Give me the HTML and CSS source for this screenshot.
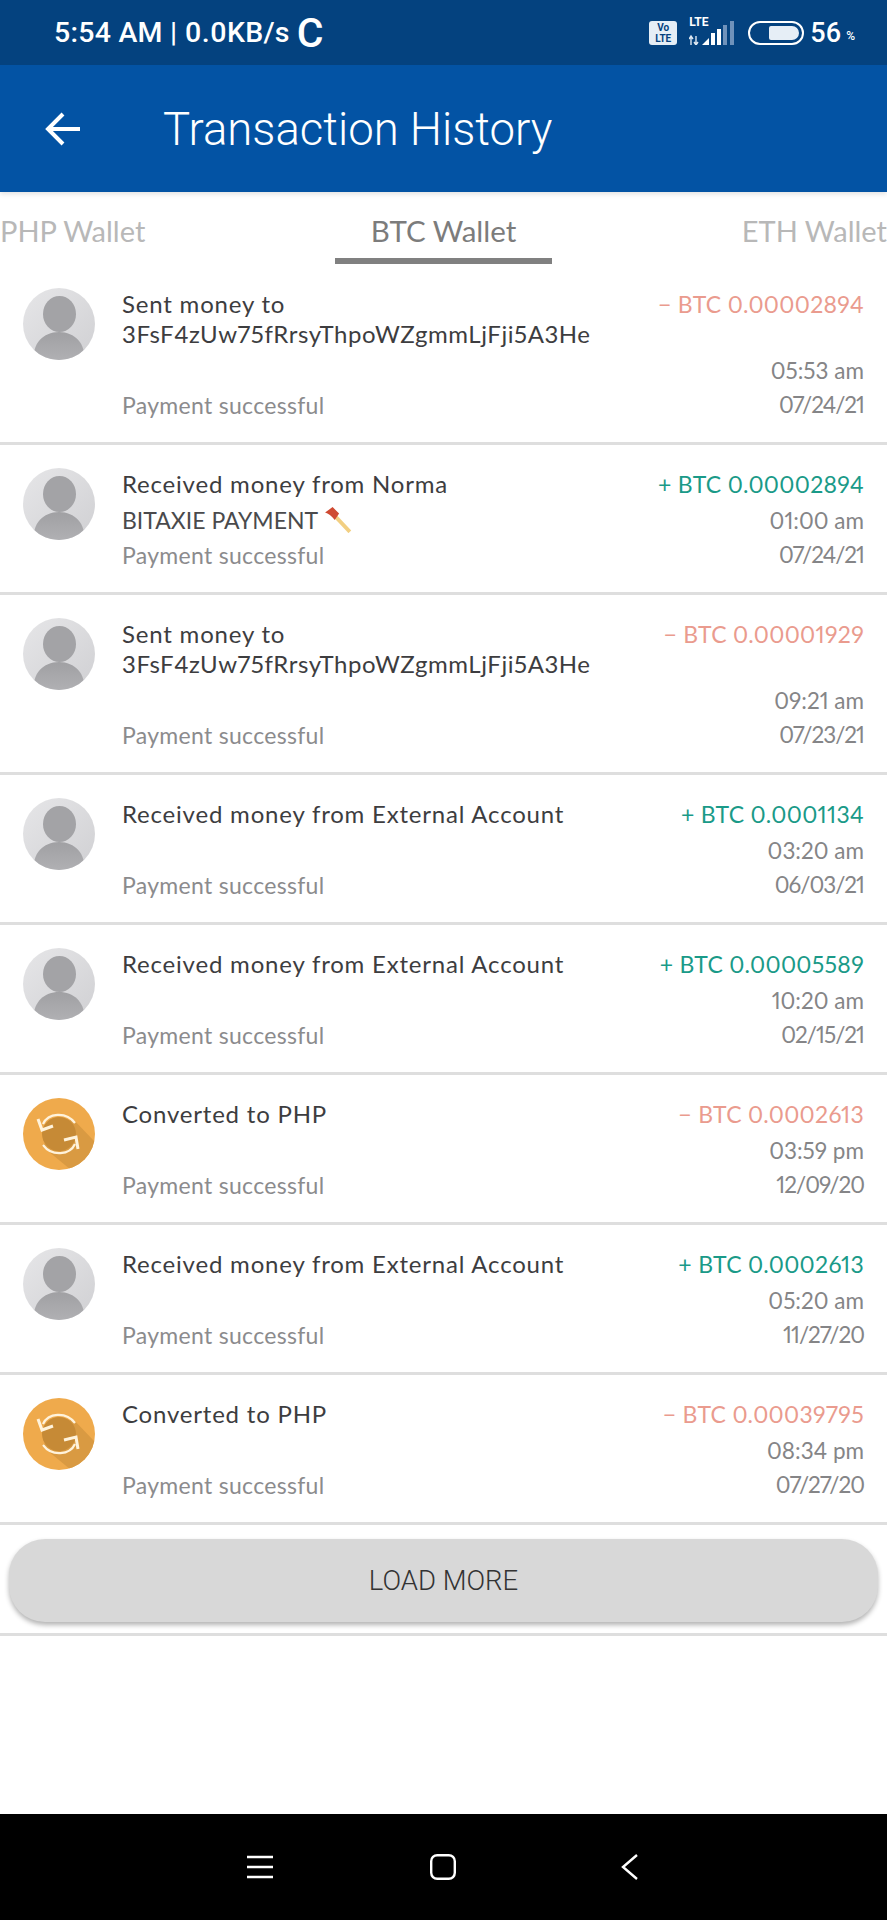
FILE: index.html
```html
<!DOCTYPE html>
<html lang="en">
<head>
<meta charset="utf-8">
<title>Transaction History</title>
<link rel="stylesheet" href="styles.css">
</head>
<body>
<svg class="defs" width="0" height="0" aria-hidden="true">
  <defs>
    <linearGradient id="avatarBg" x1="0" y1="0" x2="1" y2="1">
      <stop offset="0" stop-color="#e6e6e8"/>
      <stop offset="1" stop-color="#d0d0d3"/>
    </linearGradient>
    <linearGradient id="bodyFill" x1="0" y1="0" x2="0" y2="1">
      <stop offset="0" stop-color="#a0a0a3"/>
      <stop offset="1" stop-color="#b0b0b3"/>
    </linearGradient>
    <clipPath id="circleClip"><circle cx="36" cy="36" r="36"/></clipPath>
    <symbol id="avatar" viewBox="0 0 72 72">
      <circle cx="36" cy="36" r="36" fill="url(#avatarBg)"/>
      <ellipse cx="36.5" cy="26" rx="16.5" ry="18" fill="#a3a3a6"/>
      <path d="M11 72 C9 56 20 44 36 44 C52 44 63 56 61 72 Z" fill="url(#bodyFill)" clip-path="url(#circleClip)"/>
    </symbol>
    <symbol id="convert" viewBox="0 0 72 72">
      <circle cx="36" cy="36" r="36" fill="#efaa4c"/>
      <path d="M19 48 L48 72 L72 72 L72 44 L49 20 Z" fill="#d99a42" clip-path="url(#circleClip)"/>
      <circle cx="36" cy="36" r="17" fill="#c68a36"/>
      <path d="M20 26 C25 15 43 13 52 25" fill="none" stroke="#fff3dc" stroke-width="2.2"/>
      <path d="M15 21 L19 32 L30 28" fill="none" stroke="#fff3dc" stroke-width="3"/>
      <path d="M52 46 C47 57 29 59 20 47" fill="none" stroke="#fff3dc" stroke-width="2.2"/>
      <path d="M41 42 L53 39 L55 51" fill="none" stroke="#fff3dc" stroke-width="3"/>
    </symbol>
  </defs>
</svg>

<header class="topbar">
  <div class="status">
    <span class="clock">5:54 AM | 0.0KB/s</span>
    <span class="spinner">C</span>
    <div class="status-right">
      <span class="volte">Vo<br>LTE</span>
      <div class="signal">
        <span class="lte">LTE</span>
        <svg class="bars" width="46" height="24" viewBox="0 0 46 24">
          <path d="M2 24V15M0 18l2-3 2 3M7 15v9M5 21l2 3 2-3" fill="none" stroke="#dfe8f2" stroke-width="1.4"/>
          <path d="M13 24h7v-7z" fill="#fff"/>
          <rect x="22" y="12" width="4" height="12" fill="#fff"/>
          <rect x="28" y="8" width="4" height="16" fill="#fff"/>
          <rect x="34" y="4" width="4" height="20" fill="#6f92bb"/>
          <rect x="41" y="0" width="4" height="24" fill="#6f92bb"/>
        </svg>
      </div>
      <span class="battery"><span class="battery-fill"></span></span>
      <span class="pct">56</span><span class="pct-sign">%</span>
    </div>
  </div>
  <div class="appbar">
    <svg class="back" width="37" height="36" viewBox="0 0 37 36">
      <path d="M35 18H4M18 3 3 18l15 15" fill="none" stroke="#fff" stroke-width="4"/>
    </svg>
    <h1 class="title">Transaction History</h1>
  </div>
</header>

<nav class="tabs">
  <span class="tab">PHP Wallet</span>
  <span class="tab tab-active">BTC Wallet</span>
  <span class="tab">ETH Wallet</span>
</nav>

<main class="content">
  <ul class="list">
    <li class="row row-tall">
      <svg class="avatar"><use href="#avatar"/></svg>
      <div class="main">
        <div class="name">Sent money to<br><span class="addr">3FsF4zUw75fRrsyThpoWZgmmLjFji5A3He</span></div>
        <div class="state">Payment successful</div>
      </div>
      <div class="side">
        <div class="amount out">− BTC 0.00002894</div>
        <div class="time">05:53 am</div>
        <div class="date">07/24/21</div>
      </div>
    </li>
    <li class="row">
      <svg class="avatar"><use href="#avatar"/></svg>
      <div class="main">
        <div class="name">Received money from Norma</div>
        <div class="note">BITAXIE PAYMENT
          <svg class="axe" width="28" height="26" viewBox="0 0 26 24">
            <path d="M9 7 24 23" stroke="#f2cf82" stroke-width="3.5"/>
            <path d="M1 5 8 0l6 6-4 6C7 8 4 6 1 5z" fill="#cf4a32"/>
          </svg>
        </div>
        <div class="state">Payment successful</div>
      </div>
      <div class="side">
        <div class="amount in">+ BTC 0.00002894</div>
        <div class="time">01:00 am</div>
        <div class="date">07/24/21</div>
      </div>
    </li>
    <li class="row row-tall">
      <svg class="avatar"><use href="#avatar"/></svg>
      <div class="main">
        <div class="name">Sent money to<br><span class="addr">3FsF4zUw75fRrsyThpoWZgmmLjFji5A3He</span></div>
        <div class="state">Payment successful</div>
      </div>
      <div class="side">
        <div class="amount out">− BTC 0.00001929</div>
        <div class="time">09:21 am</div>
        <div class="date">07/23/21</div>
      </div>
    </li>
    <li class="row">
      <svg class="avatar"><use href="#avatar"/></svg>
      <div class="main">
        <div class="name">Received money from External Account</div>
        <div class="state">Payment successful</div>
      </div>
      <div class="side">
        <div class="amount in">+ BTC 0.0001134</div>
        <div class="time">03:20 am</div>
        <div class="date">06/03/21</div>
      </div>
    </li>
    <li class="row">
      <svg class="avatar"><use href="#avatar"/></svg>
      <div class="main">
        <div class="name">Received money from External Account</div>
        <div class="state">Payment successful</div>
      </div>
      <div class="side">
        <div class="amount in">+ BTC 0.00005589</div>
        <div class="time">10:20 am</div>
        <div class="date">02/15/21</div>
      </div>
    </li>
    <li class="row">
      <svg class="avatar"><use href="#convert"/></svg>
      <div class="main">
        <div class="name">Converted to PHP</div>
        <div class="state">Payment successful</div>
      </div>
      <div class="side">
        <div class="amount out">− BTC 0.0002613</div>
        <div class="time">03:59 pm</div>
        <div class="date">12/09/20</div>
      </div>
    </li>
    <li class="row">
      <svg class="avatar"><use href="#avatar"/></svg>
      <div class="main">
        <div class="name">Received money from External Account</div>
        <div class="state">Payment successful</div>
      </div>
      <div class="side">
        <div class="amount in">+ BTC 0.0002613</div>
        <div class="time">05:20 am</div>
        <div class="date">11/27/20</div>
      </div>
    </li>
    <li class="row">
      <svg class="avatar"><use href="#convert"/></svg>
      <div class="main">
        <div class="name">Converted to PHP</div>
        <div class="state">Payment successful</div>
      </div>
      <div class="side">
        <div class="amount out">− BTC 0.00039795</div>
        <div class="time">08:34 pm</div>
        <div class="date">07/27/20</div>
      </div>
    </li>
  </ul>
  <div class="more-wrap">
    <button class="more" type="button">LOAD MORE</button>
  </div>
</main>

<footer class="navbar">
  <svg class="nav-icon" width="26" height="26" viewBox="0 0 26 26">
    <path d="M0 3h26M0 13h26M0 23h26" stroke="#fff" stroke-width="2.4"/>
  </svg>
  <svg class="nav-icon" width="26" height="26" viewBox="0 0 26 26">
    <rect x="1.2" y="1.2" width="23.6" height="23.6" rx="6" fill="none" stroke="#fff" stroke-width="2.4"/>
  </svg>
  <svg class="nav-icon" width="26" height="26" viewBox="0 0 26 26">
    <path d="M24 1 10 13l14 12" fill="none" stroke="#fff" stroke-width="2.4"/>
  </svg>
</footer>
</body>
</html>
```

FILE: styles.css
```css
* { box-sizing: border-box; }

html, body { margin: 0; padding: 0; }

body {
  width: 887px;
  height: 1920px;
  display: flex;
  flex-direction: column;
  background: #fff;
  font-family: Lato, "Liberation Sans", sans-serif;
  font-variant-numeric: proportional-nums;
  overflow: hidden;
}

.defs { position: absolute; }

.topbar {
  color: #fff;
  position: relative;
  z-index: 1;
  box-shadow: 0 2px 5px rgba(0, 0, 0, 0.12);
}

.status {
  height: 65px;
  display: flex;
  align-items: center;
  padding: 0 32px 0 54px;
  background: #04427f;
  font-family: Roboto, sans-serif;
}

.clock {
  font-size: 28.5px;
  font-weight: 500;
  letter-spacing: 0.25px;
}

.spinner {
  margin-left: 7px;
  font-size: 41px;
  font-weight: 500;
  line-height: 40px;
}

.status-right {
  margin-left: auto;
  display: flex;
  align-items: center;
}

.volte {
  width: 28px;
  height: 24px;
  background: #e6eef6;
  border-radius: 3px;
  color: #04427f;
  font-size: 10px;
  font-weight: 700;
  line-height: 11px;
  text-align: center;
  padding-top: 1px;
}

.signal {
  position: relative;
  width: 46px;
  height: 26px;
  margin-left: 12px;
}

.lte {
  position: absolute;
  top: -3px;
  left: 0;
  font-size: 12px;
  font-weight: 700;
  line-height: 11px;
}

.bars { position: absolute; left: 0; top: 1px; }

.battery {
  width: 56px;
  height: 24px;
  margin-left: 13px;
  padding: 3px;
  border: 2px solid #fff;
  border-radius: 12px;
  display: flex;
  justify-content: flex-end;
}

.battery-fill {
  width: 30px;
  background: #e6eef6;
  border-radius: 2px 7px 7px 2px;
}

.pct {
  margin-left: 6px;
  font-size: 27px;
  font-weight: 500;
}

.pct-sign {
  margin-left: 5px;
  margin-top: 6px;
  font-size: 12px;
  font-weight: 500;
}

.appbar {
  height: 127px;
  display: flex;
  align-items: center;
  padding-left: 45px;
  background: #0353a4;
}

.back { flex: none; }

.title {
  margin: 2px 0 0 81px;
  font-family: Roboto, sans-serif;
  font-size: 45.5px;
  font-weight: 300;
  white-space: nowrap;
}

.tabs {
  height: 72px;
  flex: none;
  display: flex;
  justify-content: space-between;
  align-items: flex-end;
  margin-bottom: 1px;
  background: #fff;
}

.tab {
  height: 72px;
  display: flex;
  align-items: center;
  padding-top: 5px;
  font-size: 29px;
  color: #b8b8b8;
  white-space: nowrap;
}

.tab-active {
  padding: 10px 36px 0;
  font-size: 29.5px;
  color: #7c7c7c;
  border-bottom: 6px solid #808080;
}

.content { flex: 1; }

.list { margin: 0; padding: 0; list-style: none; }

.row {
  min-height: 150px;
  display: flex;
  padding: 21px 23px 20px;
  border-bottom: 3px solid #dedede;
}

.row-tall { min-height: 180px; }

.avatar {
  flex: none;
  width: 72px;
  height: 72px;
  margin: 2px 27px 0 0;
}

.main {
  flex: 1;
  min-width: 0;
  display: flex;
  flex-direction: column;
  font-size: 23px;
}

.name {
  padding-top: 3px;
  font-size: 24px;
  line-height: 30px;
  color: #3d3d3f;
  letter-spacing: 0.8px;
}

.addr { letter-spacing: 0.55px; }

.note {
  margin-top: 6px;
  line-height: 30px;
  color: #4a4a4c;
  white-space: nowrap;
}

.axe { vertical-align: -4px; margin-left: 1px; }

.state {
  margin-top: auto;
  line-height: 34px;
  color: #8b8b8d;
  letter-spacing: 0.3px;
}

.side {
  flex: none;
  display: flex;
  flex-direction: column;
  align-items: flex-end;
  white-space: nowrap;
}

.amount {
  line-height: 36px;
  font-size: 23px;
  letter-spacing: 0.3px;
}

.out { color: #ea9b8e; }

.in { color: #1a9a88; }

.time {
  margin-top: auto;
  font-size: 22.5px;
  line-height: 35px;
  color: #858587;
}

.date {
  font-size: 22.5px;
  line-height: 34px;
  letter-spacing: -1px;
  color: #858587;
}

.more-wrap {
  padding: 14px 9px 11px;
  border-bottom: 3px solid #dedede;
}

.more {
  display: block;
  width: 100%;
  height: 83px;
  border: 0;
  border-radius: 36px;
  background: #d8d8d8;
  box-shadow: 0 3px 5px rgba(0, 0, 0, 0.3);
  color: #333;
  font-family: Roboto, sans-serif;
  font-size: 27.5px;
  font-weight: 300;
}

.navbar {
  height: 106px;
  flex: none;
  display: flex;
  align-items: center;
  gap: 157px;
  padding-left: 247px;
  background: #000;
}

.nav-icon { flex: none; }
```
